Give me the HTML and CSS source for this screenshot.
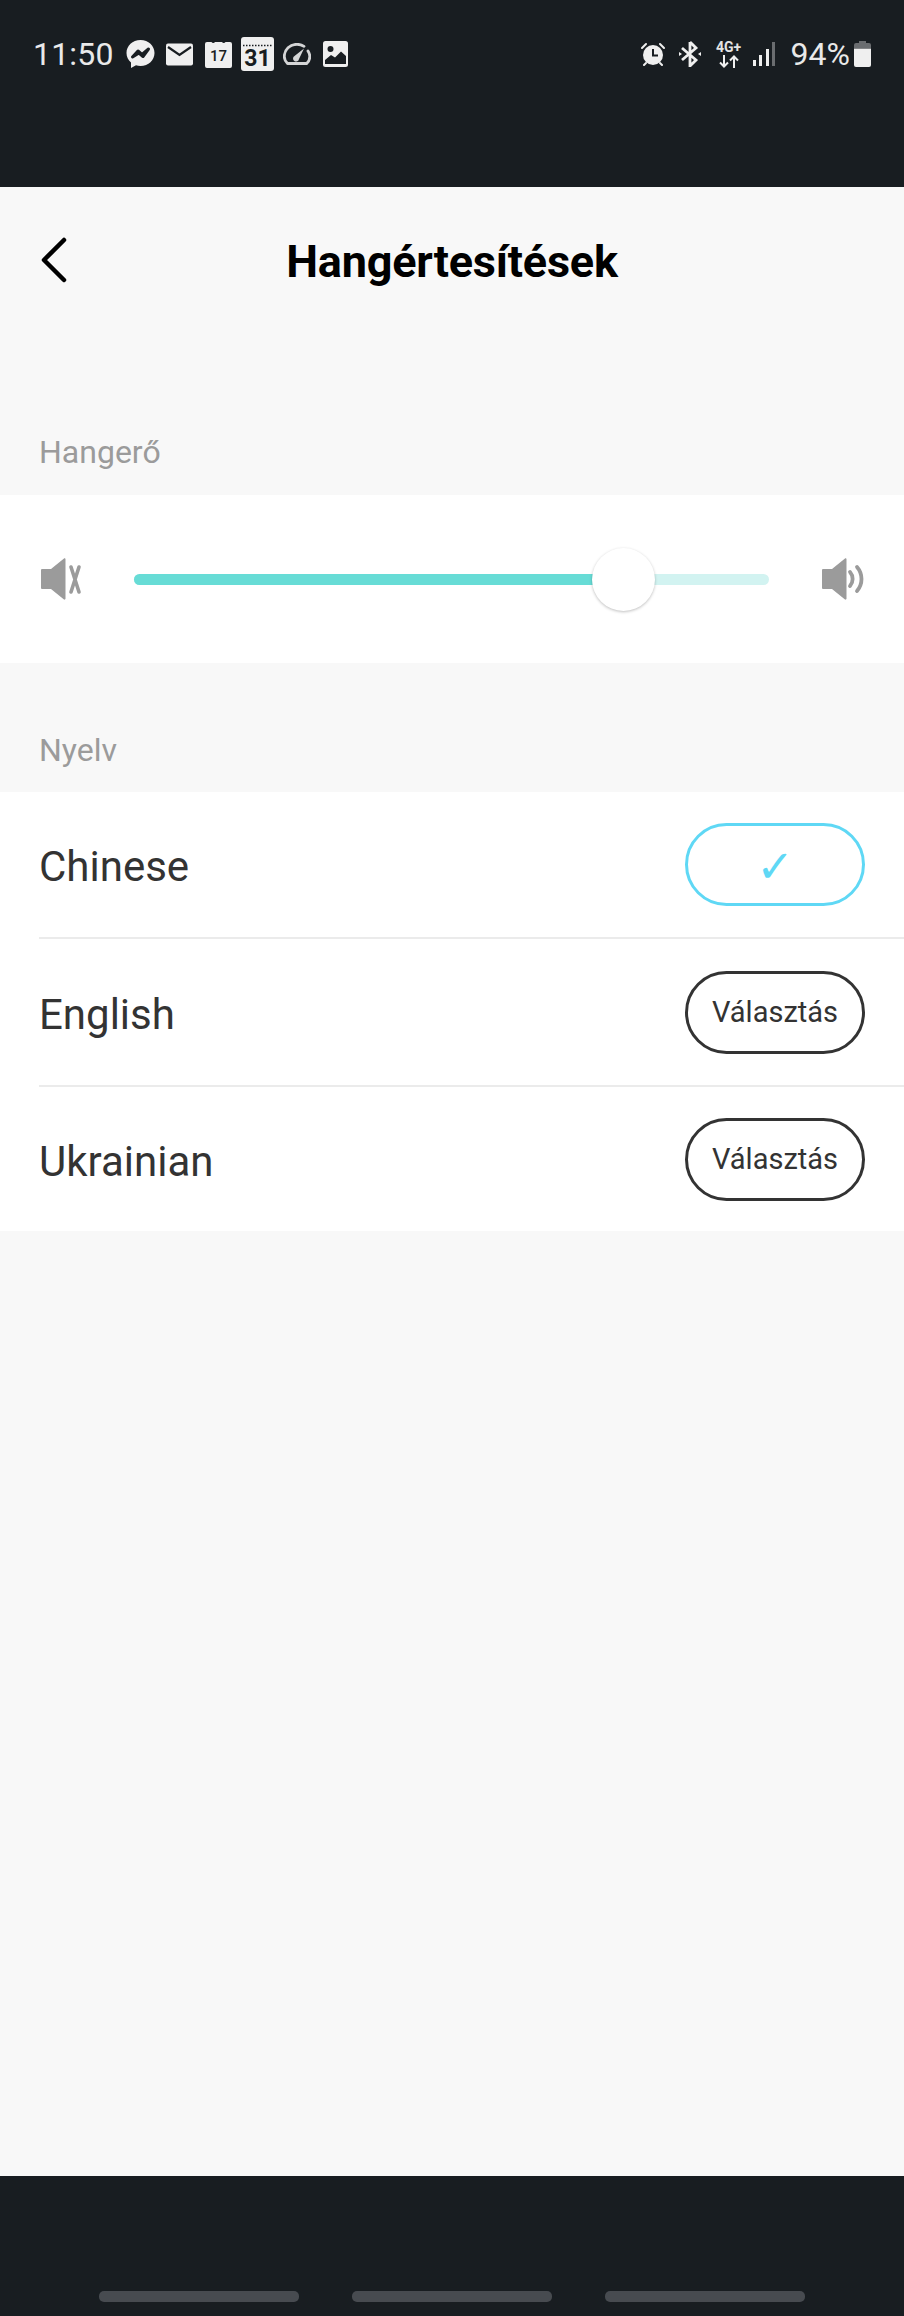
FILE: index.html
```html
<!DOCTYPE html>
<html lang="hu">
<head>
<meta charset="utf-8">
<title>Hangértesítések</title>
<link rel="stylesheet" href="styles.css">
</head>
<body>
<div class="page">
  <div class="statusbar">
    <div class="status-left">
      <span class="time">11:50</span>
      <svg class="ic ic-msg" width="29" height="28" viewBox="0 0 29 28"><path fill="#efefef" d="M14.5 0C6.5 0 .5 5.7.5 13c0 3.9 1.7 7.2 4.5 9.500V28l5-2.700c1.400.4 2.900.6 4.500.6 8 0 14-5.700 14-12.900S22.500 0 14.500 0z"/><path fill="none" stroke="#181d21" stroke-width="3" stroke-linejoin="round" d="M6.500 17l5.500-6 4 3.500 6.500-5.500-5.500 7.500-4-3.500z"/></svg>
      <svg class="ic ic-mail" width="27" height="23" viewBox="0 0 27 23"><rect width="27" height="22" y=".5" rx="2" fill="#efefef"/><path fill="none" stroke="#181d21" stroke-width="2.200" d="M2 4l11.500 8L25 4"/></svg>
      <svg class="ic ic-cal17" width="27" height="27" viewBox="0 0 27 27"><path fill="#efefef" d="M2 1h4.500a2 2 0 0 0 3.500 0h7a2 2 0 0 0 3.500 0H25a2 2 0 0 1 2 2v22a2 2 0 0 1-2 2H2a2 2 0 0 1-2-2V3a2 2 0 0 1 2-2z"/><text x="13.500" y="20" text-anchor="middle" class="cal-17">17</text></svg>
      <svg class="ic ic-cal31" width="33" height="34" viewBox="0 0 33 34"><rect width="33" height="34" rx="3" fill="#efefef"/><path stroke="#181d21" stroke-width="1.500" stroke-dasharray="1.500 1.500" d="M2 8.500h29"/><text x="16.500" y="29" text-anchor="middle" class="cal-31">31</text></svg>
      <svg class="ic ic-gauge" width="28" height="22" viewBox="0 0 28 22"><path fill="none" stroke="#d4d5d6" stroke-width="2.800" stroke-linecap="round" d="M4.500 20.500C2.500 18.500 1.300 16 1.300 13.500 1.300 6.500 7 1.300 14 1.300c3 0 5 .7 7 2M25 8c1.200 1.800 1.800 3.500 1.800 5.500 0 2.700-1.100 5.200-3.100 7l-19.200 0"/><path fill="#d4d5d6" d="M21 5.500l-5 10.500a3 3 0 1 1-4.500-3z"/></svg>
      <svg class="ic ic-img" width="25" height="26" viewBox="0 0 25 26"><rect width="25" height="26" rx="2.500" fill="#efefef"/><circle cx="7.500" cy="8" r="3" fill="#181d21"/><path fill="#181d21" d="M2 23v-4l6-5 4 2.500 6-6 5 4.500v8z"/></svg>
    </div>
    <div class="status-right">
      <svg class="ic ic-alarm" width="24" height="24" viewBox="0 0 24 24"><path fill="none" stroke="#efefef" stroke-width="2" stroke-linecap="round" d="M1 6l4-4M23 6l-4-4M5 21l-2 2M19 21l2 2"/><circle cx="12" cy="13" r="10" fill="#efefef"/><path fill="none" stroke="#181d21" stroke-width="2" d="M12 7v6.500h5"/></svg>
      <svg class="ic ic-bt" width="22" height="26" viewBox="0 0 22 26"><path fill="none" stroke="#efefef" stroke-width="2.800" d="M11 1v24l6-6L3 7M11 1l6 6L3 19"/><path fill="#efefef" d="M0 11l3 2-3 2zM22 11l-3 2 3 2z"/></svg>
      <div class="ic net">
        <span class="net-label">4G+</span>
        <svg width="20" height="13" viewBox="0 0 20 13"><path fill="none" stroke="#efefef" stroke-width="2" d="M5 0v11M1 7.500l4 4 4-4M15 13V2M11 5.500l4-4 4 4"/></svg>
      </div>
      <svg class="ic ic-sig" width="22" height="24" viewBox="0 0 22 24"><rect y="18" width="3" height="6" fill="#efefef"/><rect x="6" y="13" width="3" height="11" fill="#efefef"/><rect x="13" y="7" width="3" height="17" fill="#efefef"/><rect x="19" y="0" width="3" height="24" fill="#6a6d70"/></svg>
      <span class="battery-pct">94%</span>
      <svg class="ic ic-batt" width="17" height="26" viewBox="0 0 17 26"><path fill="#6a6d70" d="M5 0h7v2h3a2 2 0 0 1 2 2v3H0V4a2 2 0 0 1 2-2h3z"/><path fill="#efefef" d="M0 7.500h17V24a2 2 0 0 1-2 2H2a2 2 0 0 1-2-2z"/></svg>
    </div>
  </div>

  <main class="content">
    <header class="nav">
      <svg class="back" width="26" height="46" viewBox="0 0 26 46"><path fill="none" stroke="#000" stroke-width="4.500" stroke-linecap="round" stroke-linejoin="round" d="M23 3L3 23l20 20"/></svg>
      <h1 class="title">Hangértesítések</h1>
    </header>

    <div class="label label-first">Hangerő</div>
    <section class="panel volume">
      <svg class="vol-icon" width="41" height="42" viewBox="0 0 41 42"><path fill="#9b9b9b" d="M1 11h9L23 .5c.5-.4 1.500 0 1.500.7v39.600c0 .7-1 1.100-1.500.7L10 31H1a1 1 0 0 1-1-1V12a1 1 0 0 1 1-1z"/><path fill="none" stroke="#9b9b9b" stroke-width="3.600" stroke-linecap="round" d="M30 9l8 25M38 9L30 34"/></svg>
      <div class="track">
        <div class="track-fill" style="width:77%"></div>
        <div class="thumb"></div>
      </div>
      <svg class="vol-icon vol-icon-right" width="43" height="42" viewBox="0 0 43 42"><path fill="#9b9b9b" d="M1 11h9L23 .5c.5-.4 1.500 0 1.500.7v39.600c0 .7-1 1.100-1.500.7L10 31H1a1 1 0 0 1-1-1V12a1 1 0 0 1 1-1z"/><path fill="none" stroke="#9b9b9b" stroke-width="3.800" stroke-linecap="round" d="M28 14c3.500 4 3.500 10 0 14M35 9c6 7 6 17 0 24"/></svg>
    </section>

    <div class="label label-second">Nyelv</div>
    <section class="panel langs">
      <div class="row row-first">
        <span class="lang">Chinese</span>
        <button class="pill pill-on" type="button">✓</button>
      </div>
      <div class="row">
        <span class="lang">English</span>
        <button class="pill" type="button">Választás</button>
      </div>
      <div class="row">
        <span class="lang">Ukrainian</span>
        <button class="pill" type="button">Választás</button>
      </div>
    </section>
  </main>

  <nav class="navbar">
    <span class="nav-pill"></span>
    <span class="nav-pill"></span>
    <span class="nav-pill"></span>
  </nav>
</div>
</body>
</html>
```

FILE: styles.css
```css
* { box-sizing: border-box; }
html, body { margin: 0; padding: 0; }
body { font-family: Roboto, "Noto Sans", sans-serif; background: #f8f8f8; }

.page { width: 904px; height: 2316px; display: flex; flex-direction: column; overflow: hidden; }

.statusbar {
  height: 187px; flex: none; background: #181d21; color: #e9e9e9;
  display: flex; justify-content: space-between; align-items: flex-start;
  padding: 37px 33px 0 33px;
}
.status-left, .status-right { display: flex; align-items: center; height: 34px; }
.time { font-size: 32px; line-height: 34px; width: 93px; letter-spacing: .2px; }
.ic { display: block; flex: none; }
.ic-mail { margin-left: 11px; }
.ic-cal17 { margin-left: 12px; }
.ic-cal31 { margin-left: 9px; }
.ic-gauge { margin-left: 9px; }
.ic-img { margin-left: 12px; }
.cal-17 { font: 500 15px Roboto, sans-serif; fill: #181d21; }
.cal-31 { font: 700 23px Roboto, sans-serif; fill: #181d21; }

.ic-bt { margin-left: 14px; }
.net { margin-left: 15px; width: 26px; display: flex; flex-direction: column; align-items: center; }
.net-label { font-size: 14px; line-height: 13px; font-weight: 700; color: #e4e4e4; margin-bottom: 1px; }
.ic-sig { margin-left: 11px; }
.battery-pct { font-size: 32px; line-height: 34px; margin-left: 16px; }
.ic-batt { margin-left: 4px; }

.content { flex: 1; display: flex; flex-direction: column; background: #f8f8f8; }

.nav { height: 150px; flex: none; position: relative; display: flex; align-items: center; justify-content: center; }
.back { position: absolute; left: 41px; top: 50px; }
.title { margin: 0; font-size: 45px; line-height: 52px; font-weight: 700; color: #000; letter-spacing: -.2px; }

.label { font-size: 32px; line-height: 36px; color: #9b9b9b; padding-left: 39px; display: flex; align-items: flex-end; flex: none; }
.label-first { height: 158px; padding-bottom: 25px; }
.label-second { height: 129px; padding-bottom: 24px; }

.panel { background: #fff; flex: none; }
.volume { height: 168px; display: flex; align-items: center; padding: 0 39px 0 41px; gap: 52px; }
.vol-icon { flex: none; display: block; }
.vol-icon-right { margin-left: 1px; }
.track { flex: 1; height: 11px; border-radius: 6px; background: #d2f3f1; position: relative; }
.track-fill { height: 100%; border-radius: 6px 0 0 6px; background: #67dcd6; }
.thumb {
  position: absolute; left: 458px; top: -26px; width: 63px; height: 63px; border-radius: 50%;
  background: #fff; box-shadow: 0 1px 3px rgba(0,0,0,.25);
}

.langs { display: flex; flex-direction: column; }
.row { height: 148px; display: flex; align-items: center; justify-content: space-between; margin-left: 39px; padding: 0 39px 0 0; border-bottom: 2px solid #ebebeb; }
.row-first { height: 147px; }
.row:last-child { border-bottom: 0; height: 144px; }
.lang { font-size: 42px; line-height: 50px; color: #333; margin-top: 5px; }

.pill {
  width: 180px; height: 83px; border-radius: 42px; border: 3px solid #333; background: #fff;
  font-family: Roboto, sans-serif; font-size: 29px; color: #333; padding: 0;
  display: flex; align-items: center; justify-content: center;
}
.pill-on { border-color: #5fd8f5; color: #5fd8f5; font-family: "DejaVu Sans", sans-serif; font-size: 45px; line-height: 50px; padding-top: 5px; }

.navbar { height: 140px; flex: none; background: #181d21; display: flex; justify-content: center; gap: 53px; padding-top: 115px; }
.nav-pill { width: 200px; height: 11px; border-radius: 5px; background: #474b50; }
```
